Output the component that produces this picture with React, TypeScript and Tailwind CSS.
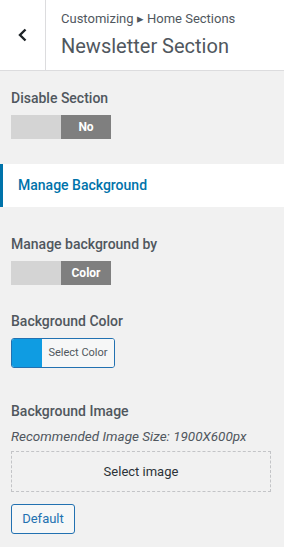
export default function App() {
  return (
    <div
      className="h-[547px] w-[284px] overflow-hidden bg-[#f1f1f1] text-[#50575e]"
      style={{ fontFamily: 'Roboto, "Liberation Sans", sans-serif' }}
    >
      {/* header */}
      <div className="flex h-[71px] border-b border-[#dcdcde] bg-white">
        <div className="flex w-[46px] items-center justify-center border-r border-[#dcdcde] text-[#1d2327]">
          <svg width="14" height="16" viewBox="0 0 14 16" fill="none">
            <path d="M9.5 2.5 4 8l5.5 5.5" stroke="currentColor" strokeWidth="2.4" />
          </svg>
        </div>
        <div className="flex flex-col pl-[15px] pt-[10px]">
          <span className="text-[13px] leading-[18px] text-[#50575e]">
            Customizing ▸ Home Sections
          </span>
          <span className="mt-[6px] text-[20px] leading-[24px] text-[#50575e]">
            Newsletter Section
          </span>
        </div>
      </div>

      <div className="px-[11px] pt-[18px]">
        <div className="text-[14px] font-medium leading-[18px]">Disable Section</div>
        <Toggle label="No" className="mt-[8px]" />
      </div>

      <div className="mt-[25px] flex h-[43px] items-center border-l-[3px] border-[#0073aa] bg-white pl-[15px] text-[14px] font-medium text-[#0073aa]">
        Manage Background
      </div>

      <div className="px-[11px] pt-[28px]">
        <div className="text-[14px] font-medium leading-[18px]">Manage background by</div>
        <Toggle label="Color" className="mt-[8px]" />

        <div className="mt-[27px] text-[14px] font-medium leading-[18px]">Background Color</div>
        <div className="mt-[8px] flex h-[30px] w-[104px] overflow-hidden rounded-[3px] border border-[#2271b1]">
          <div className="w-[30px] bg-[#0f9ce2]" />
          <div className="flex flex-1 items-center justify-center bg-[#f6f7f7] text-[11px] text-[#50575e]">
            Select Color
          </div>
        </div>

        <div className="mt-[34px] text-[14px] font-medium leading-[18px]">Background Image</div>
        <div className="mt-[7px] text-[13.5px] italic leading-[18px]">
          Recommended Image Size: 1900X600px
        </div>
        <div className="mt-[6px] flex h-[41px] w-[260px] items-center justify-center border border-dashed border-[#c3c4c7] text-[13px] text-[#2c3338]">
          Select image
        </div>
        <div className="mt-[12px] flex h-[30px] w-[64px] items-center justify-center rounded-[3px] border border-[#2271b1] bg-[#f6f7f7] text-[13px] text-[#2271b1]">
          Default
        </div>
      </div>
    </div>
  );
}

function Toggle({ label, className }: { label: string; className?: string }) {
  return (
    <div className={`flex h-[24px] w-[100px] ${className ?? ''}`}>
      <div className="w-[50px] bg-[#d4d4d4]" />
      <div className="flex w-[50px] items-center justify-center bg-[#7f7f7f] text-[12px] font-bold text-white">
        {label}
      </div>
    </div>
  );
}
